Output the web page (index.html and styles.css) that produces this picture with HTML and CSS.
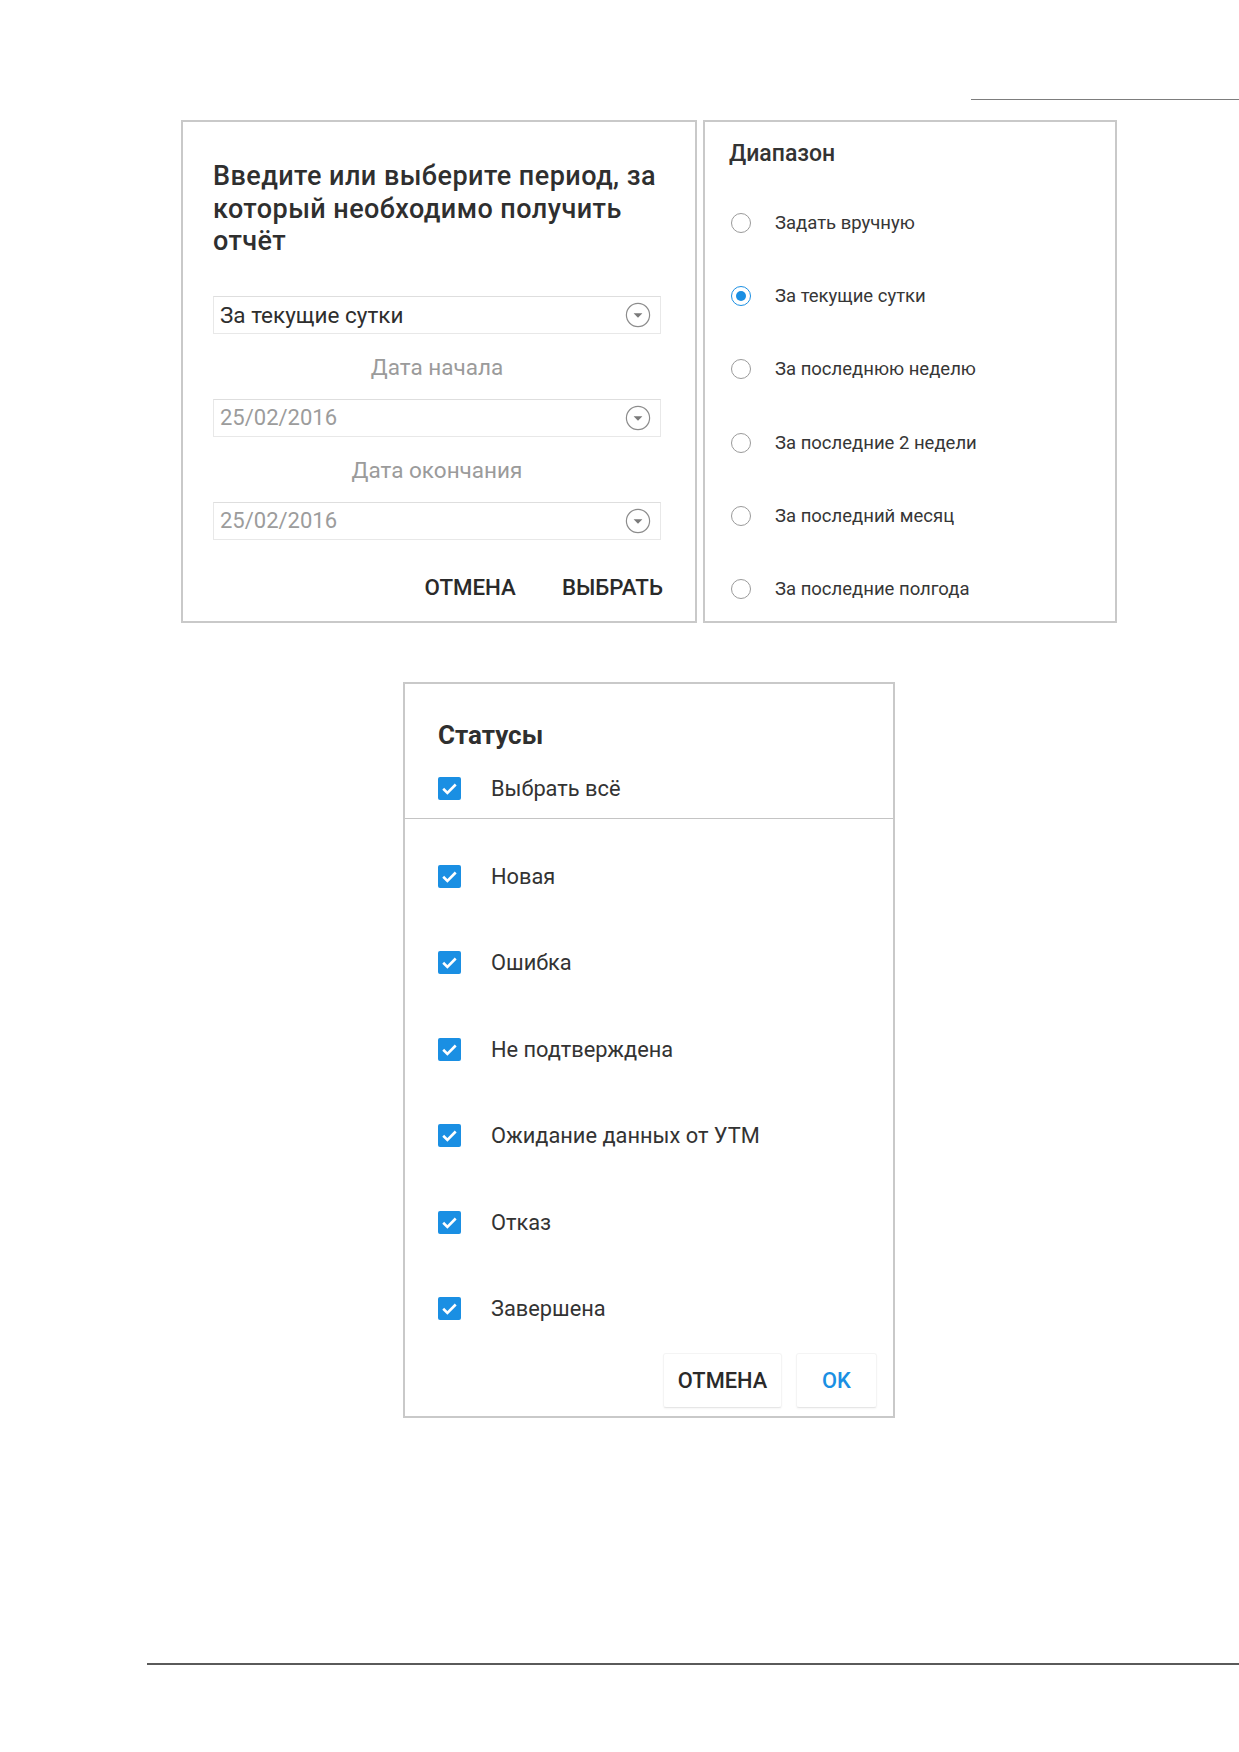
FILE: index.html
```html
<!DOCTYPE html>
<html lang="ru">
<head>
<meta charset="utf-8">
<title>Отчёт — период и статусы</title>
<link rel="stylesheet" href="styles.css">
</head>
<body>
<div class="page">
  <div class="rule rule-top"></div>

  <div class="dialogs-row">
    <section class="card card-period">
      <h2 class="period-title">Введите или выберите период, за который необходимо получить отчёт</h2>

      <div class="field field-active">
        <span class="field-value">За текущие сутки</span>
        <svg class="field-arrow" viewBox="0 0 26 26" width="26" height="26"><circle cx="13" cy="13" r="11.6" fill="#fff" stroke="#8c8c8c" stroke-width="1.2"/><path d="M8.6 11.2h8.8L13 15.8z" fill="#7a7a7a"/></svg>
      </div>

      <div class="field-label">Дата начала</div>
      <div class="field">
        <span class="field-value muted">25/02/2016</span>
        <svg class="field-arrow" viewBox="0 0 26 26" width="26" height="26"><circle cx="13" cy="13" r="11.6" fill="#fff" stroke="#8c8c8c" stroke-width="1.2"/><path d="M8.6 11.2h8.8L13 15.8z" fill="#7a7a7a"/></svg>
      </div>

      <div class="field-label">Дата окончания</div>
      <div class="field">
        <span class="field-value muted">25/02/2016</span>
        <svg class="field-arrow" viewBox="0 0 26 26" width="26" height="26"><circle cx="13" cy="13" r="11.6" fill="#fff" stroke="#8c8c8c" stroke-width="1.2"/><path d="M8.6 11.2h8.8L13 15.8z" fill="#7a7a7a"/></svg>
      </div>

      <div class="period-actions">
        <span class="text-btn">ОТМЕНА</span>
        <span class="text-btn">ВЫБРАТЬ</span>
      </div>
    </section>

    <section class="card card-range">
      <h3 class="range-title">Диапазон</h3>
      <ul class="radio-list">
        <li class="radio-row"><span class="radio"></span><span>Задать вручную</span></li>
        <li class="radio-row"><span class="radio radio-on"></span><span>За текущие сутки</span></li>
        <li class="radio-row"><span class="radio"></span><span>За последнюю неделю</span></li>
        <li class="radio-row"><span class="radio"></span><span>За последние 2 недели</span></li>
        <li class="radio-row"><span class="radio"></span><span>За последний месяц</span></li>
        <li class="radio-row"><span class="radio"></span><span>За последние полгода</span></li>
      </ul>
    </section>
  </div>

  <section class="card card-status">
    <div class="status-head">
      <h3 class="status-title">Статусы</h3>
      <div class="check-row">
        <svg class="check" viewBox="0 0 23 23" width="23" height="23"><rect width="23" height="23" rx="2" fill="#1a8fe3"/><path d="M5.2 11.8l4.2 4.1 8.3-8.4" fill="none" stroke="#fff" stroke-width="2.6"/></svg>
        <span>Выбрать всё</span>
      </div>
    </div>
    <ul class="status-list">
      <li class="check-row"><svg class="check" viewBox="0 0 23 23" width="23" height="23"><rect width="23" height="23" rx="2" fill="#1a8fe3"/><path d="M5.2 11.8l4.2 4.1 8.3-8.4" fill="none" stroke="#fff" stroke-width="2.6"/></svg><span>Новая</span></li>
      <li class="check-row"><svg class="check" viewBox="0 0 23 23" width="23" height="23"><rect width="23" height="23" rx="2" fill="#1a8fe3"/><path d="M5.2 11.8l4.2 4.1 8.3-8.4" fill="none" stroke="#fff" stroke-width="2.6"/></svg><span>Ошибка</span></li>
      <li class="check-row"><svg class="check" viewBox="0 0 23 23" width="23" height="23"><rect width="23" height="23" rx="2" fill="#1a8fe3"/><path d="M5.2 11.8l4.2 4.1 8.3-8.4" fill="none" stroke="#fff" stroke-width="2.6"/></svg><span>Не подтверждена</span></li>
      <li class="check-row"><svg class="check" viewBox="0 0 23 23" width="23" height="23"><rect width="23" height="23" rx="2" fill="#1a8fe3"/><path d="M5.2 11.8l4.2 4.1 8.3-8.4" fill="none" stroke="#fff" stroke-width="2.6"/></svg><span>Ожидание данных от УТМ</span></li>
      <li class="check-row"><svg class="check" viewBox="0 0 23 23" width="23" height="23"><rect width="23" height="23" rx="2" fill="#1a8fe3"/><path d="M5.2 11.8l4.2 4.1 8.3-8.4" fill="none" stroke="#fff" stroke-width="2.6"/></svg><span>Отказ</span></li>
      <li class="check-row"><svg class="check" viewBox="0 0 23 23" width="23" height="23"><rect width="23" height="23" rx="2" fill="#1a8fe3"/><path d="M5.2 11.8l4.2 4.1 8.3-8.4" fill="none" stroke="#fff" stroke-width="2.6"/></svg><span>Завершена</span></li>
    </ul>
    <div class="status-actions">
      <span class="box-btn box-btn-cancel">ОТМЕНА</span>
      <span class="box-btn box-btn-ok">OK</span>
    </div>
  </section>

  <div class="rule rule-bottom"></div>
</div>
</body>
</html>
```

FILE: styles.css
```css
* { box-sizing: border-box; }

html, body {
  margin: 0;
  padding: 0;
  background: #fff;
}

body {
  font-family: Roboto, "Noto Sans", "Liberation Sans", sans-serif;
  color: #333;
}

.page {
  width: 1239px;
  overflow: hidden;
}

/* page rules */
.rule-top {
  margin: 99px 0 0 971px;
  height: 1px;
  background: #7d7d7d;
}

.rule-bottom {
  margin: 245px 0 0 147px;
  height: 2px;
  background: #5a5a5a;
}

/* cards */
.card {
  border: 2px solid #c9c9c9;
  background: #fff;
}

.dialogs-row {
  display: flex;
  gap: 6px;
  margin: 20px 0 0 181px;
}

/* period dialog */
.card-period {
  width: 516px;
  height: 503px;
  padding: 38px 30px 0 30px;
  display: flex;
  flex-direction: column;
}

.period-title {
  margin: 0 0 38px;
  font-size: 27px;
  line-height: 32.5px;
  font-weight: 500;
  color: #2f2f2f;
  letter-spacing: 0.45px;
}

.field {
  width: 448px;
  height: 38px;
  border: 1px solid #e8e8e8;
  border-top-color: #dedede;
  display: flex;
  align-items: center;
  justify-content: space-between;
  padding: 0 9px 0 6px;
}

.field-value {
  font-size: 22.5px;
  color: #2e2e2e;
}

.field-value.muted {
  font-size: 22px;
  color: #9c9c9c;
}

.field-arrow {
  display: block;
}

.field-label {
  width: 448px;
  height: 65px;
  display: flex;
  align-items: center;
  justify-content: center;
  font-size: 22.5px;
  color: #9b9b9b;
  padding-top: 2px;
}

.period-actions {
  width: 450px;
  display: flex;
  justify-content: flex-end;
  gap: 46px;
  margin-top: 34px;
}

.text-btn {
  font-size: 22.3px;
  font-weight: 500;
  color: #2a2a2a;
  line-height: 26px;
}

/* range dialog */
.card-range {
  width: 414px;
  height: 503px;
  padding: 10px 20px 0 24px;
}

.range-title {
  margin: 0;
  font-size: 23px;
  line-height: 44px;
  font-weight: 500;
  color: #333;
}

.radio-list {
  list-style: none;
  margin: 27px 0 0;
  padding: 0;
  display: flex;
  flex-direction: column;
  gap: 33.2px;
}

.radio-row {
  height: 40px;
  display: flex;
  align-items: center;
  gap: 24px;
  padding-left: 2px;
  font-size: 18.5px;
  color: #363636;
}

.radio {
  width: 20px;
  height: 20px;
  border-radius: 50%;
  border: 1.5px solid #9a9a9a;
  flex: none;
  display: flex;
  align-items: center;
  justify-content: center;
}

.radio-on {
  border-color: #1a8fe3;
}

.radio-on::after {
  content: "";
  width: 10px;
  height: 10px;
  border-radius: 50%;
  background: #1a8fe3;
}

/* statuses dialog */
.card-status {
  width: 492px;
  height: 736px;
  margin: 59px 0 0 403px;
  display: flex;
  flex-direction: column;
}

.status-head {
  padding: 35px 0 10px 33px;
  border-bottom: 1px solid #c4c4c4;
}

.status-title {
  margin: 0 0 17px;
  font-size: 26px;
  line-height: 32px;
  font-weight: 700;
  color: #2f2f2f;
}

.check-row {
  height: 40px;
  display: flex;
  align-items: center;
  gap: 30px;
  font-size: 21.8px;
  color: #333;
}

.check {
  display: block;
  flex: none;
}

.status-list {
  list-style: none;
  margin: 37px 0 0;
  padding: 0 0 0 33px;
  display: flex;
  flex-direction: column;
  gap: 46.5px;
}

.status-actions {
  display: flex;
  justify-content: flex-end;
  gap: 14px;
  margin-top: 24px;
  padding-right: 16px;
}

.box-btn {
  height: 55px;
  display: flex;
  align-items: center;
  justify-content: center;
  font-size: 21.8px;
  font-weight: 500;
  border: 1px solid #f4f4f4;
  border-bottom-color: #e6e6e6;
  border-radius: 3px;
  box-shadow: 0 1px 2px rgba(0, 0, 0, 0.04);
}

.box-btn-cancel {
  width: 119px;
  color: #2a2a2a;
}

.box-btn-ok {
  width: 81px;
  color: #1a8fe3;
}
```
